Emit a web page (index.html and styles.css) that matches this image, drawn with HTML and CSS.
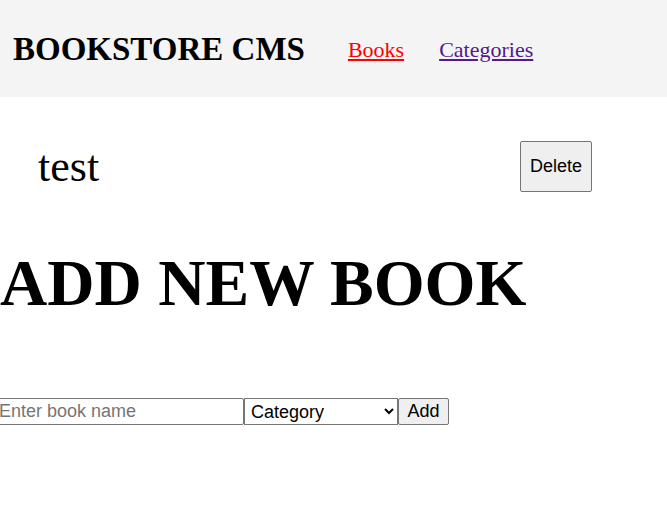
FILE: index.html
```html
<!DOCTYPE html>
<html lang="en">
<head>
<meta charset="utf-8">
<title>Bookstore CMS</title>
<link rel="stylesheet" href="styles.css">
</head>
<body>
<header class="header">
  <span class="logo">BOOKSTORE CMS</span>
  <nav class="nav">
    <a class="nav-link active" href="#books">Books</a>
    <a class="nav-link visited" href="#categories">Categories</a>
  </nav>
</header>
<main>
  <ul class="book-list">
    <li class="book">
      <span class="book-title">test</span>
      <button class="btn delete-btn" type="button">Delete</button>
    </li>
  </ul>
  <h1 class="form-title">ADD NEW BOOK</h1>
  <form class="add-form">
    <input class="field book-input" type="text" placeholder="Enter book name"><select class="field category-select"><option>Category</option></select><button class="btn add-btn" type="button">Add</button>
  </form>
</main>
</body>
</html>
```

FILE: styles.css
```css
html, body {
  margin: 0;
  padding: 0;
  background: #ffffff;
}

body {
  font-family: "Liberation Serif", "Times New Roman", serif;
  color: #000000;
}

.header {
  box-sizing: border-box;
  height: 97px;
  padding: 2px 0 0 13px;
  background: #f4f4f4;
  display: flex;
  align-items: center;
  gap: 43px;
}

.logo {
  font-size: 33px;
  font-weight: bold;
}

.nav {
  display: flex;
  gap: 35px;
}

.nav-link {
  font-size: 22px;
  text-decoration: underline;
}

.nav-link.active {
  color: #ff0000;
}

.nav-link.visited {
  color: #551a8b;
}

.book-list {
  list-style: none;
  margin: 44px 0 0;
  padding: 0 75px 0 38px;
}

.book {
  display: flex;
  justify-content: space-between;
  align-items: center;
}

.book-title {
  font-size: 44px;
}

.btn {
  font-family: "Liberation Sans", Arial, sans-serif;
  font-size: 18px;
  color: #000000;
  background: #efefef;
  border: 1px solid #767676;
  border-radius: 2px;
  margin: 0;
}

.delete-btn {
  padding: 14px 9px;
  height: 51px;
  box-sizing: border-box;
}

.form-title {
  font-size: 65.5px;
  line-height: 75px;
  font-weight: bold;
  margin: 54px 0 0;
  white-space: nowrap;
}

.add-form {
  display: flex;
  margin: 77px 0 0 -4px;
}

.field {
  box-sizing: border-box;
  height: 27px;
  margin: 0;
  font-family: "Liberation Sans", Arial, sans-serif;
  font-size: 18px;
  color: #000000;
  border: 1px solid #767676;
  background: #ffffff;
}

.book-input {
  width: 248px;
  padding: 1px 2px;
  border-radius: 2px;
}

.book-input::placeholder {
  color: #757575;
}

.category-select {
  width: 154px;
  padding: 0 0 0 2px;
  border-radius: 0;
}

.add-btn {
  box-sizing: border-box;
  height: 27px;
  width: 51px;
  padding: 1px 6px;
}
```
